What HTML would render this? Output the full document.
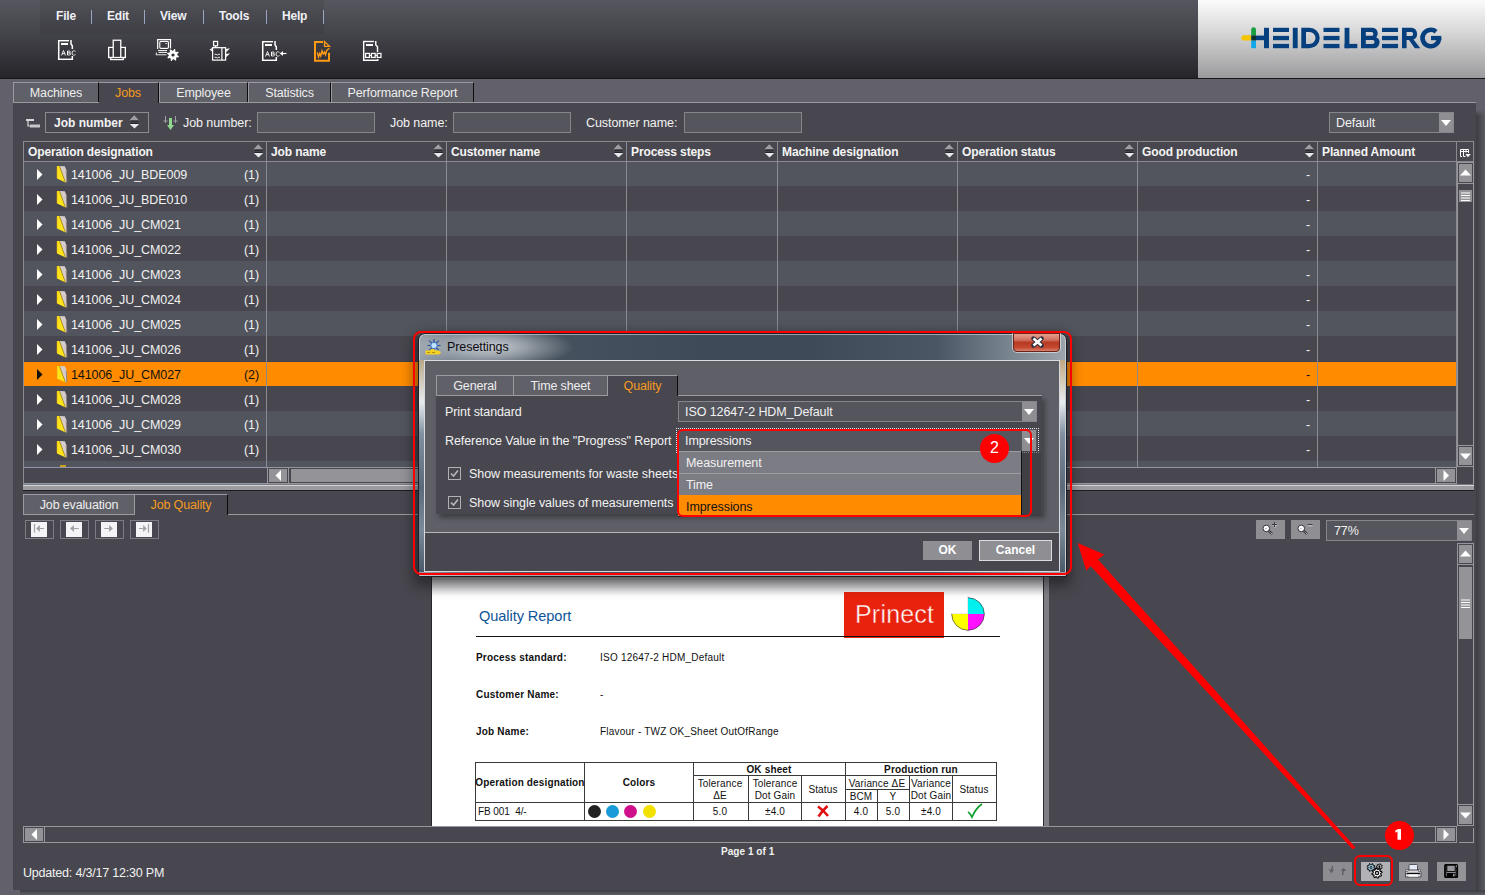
<!DOCTYPE html>
<html><head><meta charset="utf-8"><style>
*{margin:0;padding:0;box-sizing:border-box}
html,body{width:1485px;height:895px;overflow:hidden;background:#62616b;font-family:"Liberation Sans",sans-serif;font-size:12px;color:#f2f2f2}
.a{position:absolute}
.menu{top:9px;font-weight:bold;font-size:12px;color:#eef0f4;line-height:14px;letter-spacing:-0.2px}
.msep{top:10px;width:1px;height:14px;background:#9aa4c0}
.tab{height:21px;background:#606068;border-top:1px solid #9a9aa0;border-left:1px solid #9a9aa0;border-right:1px solid #0c0c0e;text-align:center;line-height:20px;font-size:12.5px;letter-spacing:-0.15px;color:#eee;white-space:nowrap}
.inp{height:21px;background:#55555d;border:1px solid #85858b}
.lbl{line-height:14px;white-space:nowrap}
.th{height:19px;font-weight:bold;line-height:19px;padding-left:5px;color:#f4f4f4;white-space:nowrap;letter-spacing:-0.12px}
.vl{width:1px;background:#8a8a90}
.hl{height:1px;background:#8a8a90}
.tx{white-space:nowrap;line-height:14px;font-size:12.5px;letter-spacing:-0.08px}
.btn{background:#8e8e93}
</style></head><body>
<div class="a" style="left:0;top:0;width:1198px;height:78px;background:linear-gradient(#56565e,#45454c 40%,#25252a)"></div>
<div class="a" style="left:40px;top:0;width:284px;height:34px;background:rgba(0,0,0,0.07)"></div>
<div class="a" style="left:1198px;top:0;width:287px;height:78px;background:linear-gradient(#fbfbfb,#d8d8d9 40%,#9b9b9d)"></div>
<div class="a" style="left:0;top:78px;width:1485px;height:1px;background:#17171a"></div>
<div class="a menu" style="left:56px">File</div>
<div class="a menu" style="left:107px">Edit</div>
<div class="a menu" style="left:160px">View</div>
<div class="a menu" style="left:219px">Tools</div>
<div class="a menu" style="left:282px">Help</div>
<div class="a msep" style="left:91px"></div>
<div class="a msep" style="left:144px"></div>
<div class="a msep" style="left:203px"></div>
<div class="a msep" style="left:266px"></div>
<div class="a msep" style="left:323px"></div>
<svg class="a" style="left:54px;top:36px" width="30" height="28" viewBox="54 36 30 28"><g style="filter:drop-shadow(0.6px 0.6px 0.4px #000)"><path d="M58.75 40 V60 M58 40.75 H69 M58 59.3 H73.0 M72.3 56 V60" fill="none" stroke="#fff" stroke-width="1.6"/><path d="M71 40 V44 L72.3 45.8 V49" fill="none" stroke="#fff" stroke-width="1.6"/><rect x="61" y="43" width="7" height="2" fill="#fff"/><path d="M61.5 55.5 L63.5 50.5 L65.5 55.5 M62.3 53.7 H64.7" fill="none" stroke="#fff" stroke-width="1"/><path d="M67.5 55.0 V51.0 H69.3 Q70.3 51.0 70.3 52.0 Q70.3 52.9 69.3 52.9 H67.5 M69.3 52.9 Q70.5 52.9 70.5 54.0 Q70.5 55.0 69.3 55.0 H67.5" fill="none" stroke="#fff" stroke-width="1"/><path d="M75.5 51.5 Q74.8 50.8 73.8 50.8 Q72 50.8 72 53.0 Q72 55.2 73.8 55.2 Q74.8 55.2 75.5 54.5" fill="none" stroke="#fff" stroke-width="1"/></g></svg>
<svg class="a" style="left:104px;top:36px" width="30" height="28" viewBox="104 36 30 28"><g style="filter:drop-shadow(0.6px 0.6px 0.4px #000)" fill="none" stroke="#fff" stroke-width="1.4"><rect x="113.2" y="40.2" width="7.6" height="17.3"/><path d="M113 47.4H108.7V57.5H113M121 47.4H125.3V57.5H121"/><path d="M110.7 57.6V59.6H123.3V57.6" stroke-width="1.3"/></g></svg>
<svg class="a" style="left:152px;top:34px" width="32" height="30" viewBox="152 34 32 30"><g style="filter:drop-shadow(0.6px 0.6px 0.4px #000)"><path d="M157.7 49V39.6H170.5V48.5" fill="none" stroke="#fff" stroke-width="1.3"/><rect x="159.8" y="41.4" width="8.6" height="6.9" rx="1" fill="none" stroke="#fff" stroke-width="1.2"/><path d="M165.3 43.6H167" stroke="#fff" stroke-width="0.9"/><path d="M158 50.6H167M158.5 52.4H167M156.5 52.5 156 54.8H166.5" fill="none" stroke="#fff" stroke-width="1"/><polygon points="178.98,56.19 178.64,57.33 176.58,57.39 176.04,58.04 176.39,60.07 175.33,60.64 173.84,59.22 173.00,59.30 171.81,60.98 170.67,60.64 170.61,58.58 169.96,58.04 167.93,58.39 167.36,57.33 168.78,55.84 168.70,55.00 167.02,53.81 167.36,52.67 169.42,52.61 169.96,51.96 169.61,49.93 170.67,49.36 172.16,50.78 173.00,50.70 174.19,49.02 175.33,49.36 175.39,51.42 176.04,51.96 178.07,51.61 178.64,52.67 177.22,54.16 177.30,55.00" fill="#fff"/><circle cx="173" cy="55" r="1.6" fill="#2e2e34"/></g></svg>
<svg class="a" style="left:205px;top:36px" width="30" height="28" viewBox="205 36 30 28"><g style="filter:drop-shadow(0.6px 0.6px 0.4px #000)" fill="none" stroke="#fff" stroke-width="1.3"><rect x="213.6" y="41.4" width="4" height="4.4"/><path d="M215.6 46V47.6"/><rect x="212.6" y="47.7" width="13" height="12.4"/><path d="M221.9 48V60"/><path d="M212.5 48.5 210.5 49.5 212.5 51M225.8 49.5 228.5 49 226 51.5M225.8 54.5 228.5 54 226 56.5" stroke-width="1.1"/><path d="M214.5 54.3H216.5L217.3 55.3L218.1 54.3H220M214.5 57.3H216.5L217.3 58.3L218.1 57.3H220" stroke-width="1"/></g></svg>
<svg class="a" style="left:258px;top:36px" width="32" height="28" viewBox="258 36 32 28"><g style="filter:drop-shadow(0.6px 0.6px 0.4px #000)"><path d="M262.75 41 V61 M262 41.75 H273 M262 60.3 H277.0 M276.3 57 V61" fill="none" stroke="#fff" stroke-width="1.6"/><path d="M275 41 V45 L276.3 46.8 V50" fill="none" stroke="#fff" stroke-width="1.6"/><rect x="265" y="44" width="7" height="2" fill="#fff"/><path d="M265.5 56.5 L267.5 51.5 L269.5 56.5 M266.3 54.7 H268.7" fill="none" stroke="#fff" stroke-width="1"/><path d="M271.5 56.0 V52.0 H273.3 Q274.3 52.0 274.3 53.0 Q274.3 53.9 273.3 53.9 H271.5 M273.3 53.9 Q274.5 53.9 274.5 55.0 Q274.5 56.0 273.3 56.0 H271.5" fill="none" stroke="#fff" stroke-width="1"/><path d="M279.5 52.5 Q278.8 51.8 277.8 51.8 Q276 51.8 276 54.0 Q276 56.2 277.8 56.2 Q278.8 56.2 279.5 55.5" fill="none" stroke="#fff" stroke-width="1"/><path d="M280.5 53.5H286.5" stroke="#fff" stroke-width="1.2"/><path d="M279.8 53.5 283 51V56Z" fill="#fff"/></g></svg>
<svg class="a" style="left:308px;top:36px" width="30" height="30" viewBox="308 36 30 30"><g stroke="#ff9a14" fill="none"><path d="M315 41V61.5M314 42H323M314 60.7H330M329 52.8V61.5" stroke-width="2"/><path d="M324.5 41.5V46.3H329.5Z" stroke-width="1.3"/><path d="M317.3 52.3 318.5 57 319.7 53.5 320.7 56 322 50.8 323.2 54 324.5 52 325.6 54.8 326.8 50.2 329.5 48.3" stroke-width="1.4"/></g></svg>
<svg class="a" style="left:356px;top:36px" width="32" height="28" viewBox="356 36 32 28"><g style="filter:drop-shadow(0.6px 0.6px 0.4px #000)"><path d="M363.7 40.8V61 M363 41.55H374 M363 60.3H378.5 M377.8 59V61" fill="none" stroke="#fff" stroke-width="1.5"/><path d="M375.8 41V45L377.5 46.8V52" fill="none" stroke="#fff" stroke-width="1.5"/><rect x="366" y="44" width="7" height="2" fill="#fff"/><rect x="365.6" y="53.4" width="3.8" height="4" fill="none" stroke="#fff" stroke-width="1.3"/><rect x="371.4" y="53.4" width="3.8" height="4" fill="none" stroke="#fff" stroke-width="1.3"/><rect x="377.2" y="53.4" width="3.8" height="4" fill="none" stroke="#fff" stroke-width="1.3"/><path d="M369.4 55.4H371.4M375.2 55.4H377.2" stroke="#fff" stroke-width="1"/></g></svg>
<svg class="a" style="left:1238px;top:22px" width="210" height="30" viewBox="1238 22 210 30"><g fill="#063f7e"><rect x="1256" y="35.6" width="9" height="4.6"/><rect x="1264" y="27.8" width="5" height="20.4"/><rect x="1273" y="27.8" width="16" height="4.2"/><rect x="1273" y="35.9" width="16" height="4.3"/><rect x="1273" y="43.9" width="16" height="4.3"/><rect x="1292.8" y="27.8" width="4.9" height="20.4"/><path d="M1301.3 27.8H1309.5A10.2 10.2 0 0 1 1309.5 48.2H1301.3ZM1306 32V44H1309.5A6 6 0 0 0 1309.5 32Z" fill-rule="evenodd"/><rect x="1323.5" y="27.8" width="16" height="4.2"/><rect x="1323.5" y="35.9" width="16" height="4.3"/><rect x="1323.5" y="43.9" width="16" height="4.3"/><rect x="1344.6" y="27.8" width="4.8" height="20.4"/><rect x="1344.6" y="43.9" width="12.7" height="4.3"/><path d="M1361 27.8H1372A5.6 5.6 0 0 1 1376.2 37.2 5.8 5.8 0 0 1 1373 48.2H1361ZM1365.8 32V35.8H1371.5A1.9 1.9 0 0 0 1371.5 32ZM1365.8 39.9V44.1H1372.5A2.1 2.1 0 0 0 1372.5 39.9Z" fill-rule="evenodd"/><rect x="1382" y="27.8" width="16" height="4.2"/><rect x="1382" y="35.9" width="16" height="4.3"/><rect x="1382" y="43.9" width="16" height="4.3"/><path d="M1402 27.8H1411.5A6.2 6.2 0 0 1 1413.5 39.6L1420.3 48.2H1414.8L1409 40H1406.6V48.2H1402ZM1406.6 32V35.9H1411.2A1.95 1.95 0 0 0 1411.2 32Z" fill-rule="evenodd"/><path d="M1436.1 31.7A8.25 8.25 0 1 0 1439.05 38" fill="none" stroke="#063f7e" stroke-width="4.6"/><rect x="1431" y="35.9" width="10.3" height="4.3"/></g><path d="M1251.3 35.3H1244A2.6 2.6 0 0 0 1244 40.5H1251.3Z" fill="#f5c400"/><path d="M1251.2 35.3V29.6A2.4 2.4 0 0 1 1256 29.6V35.3Z" fill="#16a040"/><rect x="1251.2" y="40.5" width="4.8" height="7.7" fill="#10a8e8"/><rect x="1251.2" y="35.3" width="4.8" height="5.2" fill="#0a3530"/></svg>
<div class="a" style="left:1476px;top:110px;width:9px;height:785px;background:linear-gradient(#62616b,rgba(98,97,107,0) 6px),linear-gradient(90deg,#3c3c43,#5a5a62)"></div>
<div class="a" style="left:20px;top:890px;width:1465px;height:5px;background:linear-gradient(#3c3c43,#5e5e66)"></div>
<div class="a" style="left:13px;top:102px;width:1463px;height:788px;background:#48474f;border-top:1px solid #9a9aa0"></div>
<div class="a tab" style="left:13px;top:82px;width:86px;height:20px">Machines</div>
<div class="a tab" style="left:99px;top:82px;width:60px;height:21px;background:#48474f;color:#f59a1e;border-left:none;padding-right:1px">Jobs</div>
<div class="a tab" style="left:159px;top:82px;width:89px;height:20px">Employee</div>
<div class="a tab" style="left:248px;top:82px;width:83px;height:20px">Statistics</div>
<div class="a tab" style="left:331px;top:82px;width:143px;height:20px">Performance Report</div>
<svg class="a" style="left:25px;top:118px" width="16" height="11" viewBox="0 0 16 11"><rect x="1" y="1" width="8" height="2" fill="#d8d8dc"/><path d="M3 3V8H5" stroke="#d8d8dc" stroke-width="1.2" fill="none"/><rect x="5" y="6.5" width="10" height="3" fill="#c8c8cc"/></svg>
<div class="a inp" style="left:45px;top:112px;width:104px;background:#48474f;border-color:#8a8a90"></div>
<div class="a tx" style="left:54px;top:116px;font-weight:bold;font-size:12px;letter-spacing:0">Job number</div>
<svg class="a" style="left:129px;top:115px" width="11" height="15" viewBox="0 0 11 15"><path d="M0.8 5.6 5.5 0.6 10.2 5.6Z" fill="#9c9ca2"/><path d="M1 5.3 5.5 0.6" stroke="#d8dae4" stroke-width="0.5"/><rect x="1.5" y="5.5" width="8" height="1.2" fill="#25252a"/><rect x="1.5" y="7.9" width="8" height="1.2" fill="#25252a"/><path d="M0.8 9.1 10.2 9.1 5.5 13.6Z" fill="#e8eaf2"/></svg>
<svg class="a" style="left:163px;top:116px" width="15" height="15" viewBox="0 0 15 15"><path d="M2.5 0V7M0.5 5H4.5M12.5 0V7M10.5 5H14.5" stroke="#a0a0a8" stroke-width="1"/><path d="M6 2H9V9H11L7.5 14 4 9H6Z" fill="#90d890"/></svg>
<div class="a tx" style="left:183px;top:116px">Job number:</div>
<div class="a inp" style="left:257px;top:112px;width:118px"></div>
<div class="a tx" style="left:390px;top:116px">Job name:</div>
<div class="a inp" style="left:453px;top:112px;width:118px"></div>
<div class="a tx" style="left:586px;top:116px">Customer name:</div>
<div class="a inp" style="left:684px;top:112px;width:118px"></div>
<div class="a inp" style="left:1329px;top:112px;width:125px"></div>
<div class="a tx" style="left:1336px;top:116px">Default</div>
<div class="a btn" style="left:1439px;top:113px;width:14px;height:19px"></div>
<svg class="a" style="left:1440px;top:119px" width="12" height="8" viewBox="0 0 12 8"><path d="M1 1H11L6 7Z" fill="#fff"/></svg>
<div class="a" style="left:23px;top:141px;width:1451px;height:343px;border:1px solid #8a8a90;border-bottom:none"></div>
<div class="a" style="left:24px;top:161px;width:1432px;height:25px;background:#52555d"></div>
<div class="a" style="left:24px;top:186px;width:1432px;height:25px;background:#48474f"></div>
<div class="a" style="left:24px;top:211px;width:1432px;height:25px;background:#52555d"></div>
<div class="a" style="left:24px;top:236px;width:1432px;height:25px;background:#48474f"></div>
<div class="a" style="left:24px;top:261px;width:1432px;height:25px;background:#52555d"></div>
<div class="a" style="left:24px;top:286px;width:1432px;height:25px;background:#48474f"></div>
<div class="a" style="left:24px;top:311px;width:1432px;height:25px;background:#52555d"></div>
<div class="a" style="left:24px;top:336px;width:1432px;height:25px;background:#48474f"></div>
<div class="a" style="left:24px;top:361px;width:1432px;height:25px;background:#ff8c00"></div>
<div class="a" style="left:24px;top:361px;width:1432px;height:1px;background:#3c4252"></div>
<div class="a" style="left:24px;top:386px;width:1432px;height:1px;background:#3c4252"></div>
<div class="a" style="left:24px;top:386px;width:1432px;height:25px;background:#48474f"></div>
<div class="a" style="left:24px;top:411px;width:1432px;height:25px;background:#52555d"></div>
<div class="a" style="left:24px;top:436px;width:1432px;height:25px;background:#48474f"></div>
<div class="a" style="left:24px;top:461px;width:1432px;height:6px;background:#52555d"></div>
<div class="a hl" style="left:24px;top:161px;width:1449px"></div>
<div class="a th" style="left:23px;top:143px">Operation designation</div>
<svg class="a" style="left:253px;top:144px" width="11" height="15" viewBox="0 0 11 15"><path d="M0.8 5.6 5.5 0.6 10.2 5.6Z" fill="#9c9ca2"/><path d="M1 5.3 5.5 0.6" stroke="#d8dae4" stroke-width="0.5"/><rect x="1.5" y="5.5" width="8" height="1.2" fill="#25252a"/><rect x="1.5" y="7.9" width="8" height="1.2" fill="#25252a"/><path d="M0.8 9.1 10.2 9.1 5.5 13.6Z" fill="#e8eaf2"/></svg>
<div class="a th" style="left:266px;top:143px">Job name</div>
<svg class="a" style="left:433px;top:144px" width="11" height="15" viewBox="0 0 11 15"><path d="M0.8 5.6 5.5 0.6 10.2 5.6Z" fill="#9c9ca2"/><path d="M1 5.3 5.5 0.6" stroke="#d8dae4" stroke-width="0.5"/><rect x="1.5" y="5.5" width="8" height="1.2" fill="#25252a"/><rect x="1.5" y="7.9" width="8" height="1.2" fill="#25252a"/><path d="M0.8 9.1 10.2 9.1 5.5 13.6Z" fill="#e8eaf2"/></svg>
<div class="a th" style="left:446px;top:143px">Customer name</div>
<svg class="a" style="left:613px;top:144px" width="11" height="15" viewBox="0 0 11 15"><path d="M0.8 5.6 5.5 0.6 10.2 5.6Z" fill="#9c9ca2"/><path d="M1 5.3 5.5 0.6" stroke="#d8dae4" stroke-width="0.5"/><rect x="1.5" y="5.5" width="8" height="1.2" fill="#25252a"/><rect x="1.5" y="7.9" width="8" height="1.2" fill="#25252a"/><path d="M0.8 9.1 10.2 9.1 5.5 13.6Z" fill="#e8eaf2"/></svg>
<div class="a th" style="left:626px;top:143px">Process steps</div>
<svg class="a" style="left:764px;top:144px" width="11" height="15" viewBox="0 0 11 15"><path d="M0.8 5.6 5.5 0.6 10.2 5.6Z" fill="#9c9ca2"/><path d="M1 5.3 5.5 0.6" stroke="#d8dae4" stroke-width="0.5"/><rect x="1.5" y="5.5" width="8" height="1.2" fill="#25252a"/><rect x="1.5" y="7.9" width="8" height="1.2" fill="#25252a"/><path d="M0.8 9.1 10.2 9.1 5.5 13.6Z" fill="#e8eaf2"/></svg>
<div class="a th" style="left:777px;top:143px">Machine designation</div>
<svg class="a" style="left:944px;top:144px" width="11" height="15" viewBox="0 0 11 15"><path d="M0.8 5.6 5.5 0.6 10.2 5.6Z" fill="#9c9ca2"/><path d="M1 5.3 5.5 0.6" stroke="#d8dae4" stroke-width="0.5"/><rect x="1.5" y="5.5" width="8" height="1.2" fill="#25252a"/><rect x="1.5" y="7.9" width="8" height="1.2" fill="#25252a"/><path d="M0.8 9.1 10.2 9.1 5.5 13.6Z" fill="#e8eaf2"/></svg>
<div class="a th" style="left:957px;top:143px">Operation status</div>
<svg class="a" style="left:1124px;top:144px" width="11" height="15" viewBox="0 0 11 15"><path d="M0.8 5.6 5.5 0.6 10.2 5.6Z" fill="#9c9ca2"/><path d="M1 5.3 5.5 0.6" stroke="#d8dae4" stroke-width="0.5"/><rect x="1.5" y="5.5" width="8" height="1.2" fill="#25252a"/><rect x="1.5" y="7.9" width="8" height="1.2" fill="#25252a"/><path d="M0.8 9.1 10.2 9.1 5.5 13.6Z" fill="#e8eaf2"/></svg>
<div class="a th" style="left:1137px;top:143px">Good production</div>
<svg class="a" style="left:1304px;top:144px" width="11" height="15" viewBox="0 0 11 15"><path d="M0.8 5.6 5.5 0.6 10.2 5.6Z" fill="#9c9ca2"/><path d="M1 5.3 5.5 0.6" stroke="#d8dae4" stroke-width="0.5"/><rect x="1.5" y="5.5" width="8" height="1.2" fill="#25252a"/><rect x="1.5" y="7.9" width="8" height="1.2" fill="#25252a"/><path d="M0.8 9.1 10.2 9.1 5.5 13.6Z" fill="#e8eaf2"/></svg>
<div class="a th" style="left:1317px;top:143px">Planned Amount</div>
<div class="a vl" style="left:266px;top:142px;height:325px"></div>
<div class="a vl" style="left:446px;top:142px;height:325px"></div>
<div class="a vl" style="left:626px;top:142px;height:325px"></div>
<div class="a vl" style="left:777px;top:142px;height:325px"></div>
<div class="a vl" style="left:957px;top:142px;height:325px"></div>
<div class="a vl" style="left:1137px;top:142px;height:325px"></div>
<div class="a vl" style="left:1317px;top:142px;height:325px"></div>
<div class="a vl" style="left:1456px;top:142px;height:325px"></div>
<svg class="a" style="left:37px;top:169px" width="6" height="11" viewBox="0 0 6 11"><path d="M0 0 5.5 5.5 0 11Z" fill="#fff"/></svg>
<svg class="a" style="left:52px;top:162px" width="20" height="24" viewBox="0 0 20 24"><path d="M7.5 4 12.8 4.2 14.6 8.5 14.8 20.3 13.2 20.3Z" fill="#d6cccc"/><path d="M14.2 8.5 14.9 20.3" stroke="#8a7a78" stroke-width="0.9"/><path d="M5 4 7.5 4 13.6 20.5 5 16.5Z" fill="#ffe41c"/><path d="M7.5 4.3 13.4 20.3" stroke="#a08018" stroke-width="0.8"/><path d="M5 4.5V16" stroke="#e0a010" stroke-width="0.6"/></svg>
<div class="a tx" style="left:71px;top:168px;color:#f2f2f2">141006_JU_BDE009</div>
<div class="a tx" style="left:244px;top:168px;color:#f2f2f2">(1)</div>
<div class="a tx" style="left:1306px;top:168px;color:#f2f2f2">-</div>
<svg class="a" style="left:37px;top:194px" width="6" height="11" viewBox="0 0 6 11"><path d="M0 0 5.5 5.5 0 11Z" fill="#fff"/></svg>
<svg class="a" style="left:52px;top:187px" width="20" height="24" viewBox="0 0 20 24"><path d="M7.5 4 12.8 4.2 14.6 8.5 14.8 20.3 13.2 20.3Z" fill="#d6cccc"/><path d="M14.2 8.5 14.9 20.3" stroke="#8a7a78" stroke-width="0.9"/><path d="M5 4 7.5 4 13.6 20.5 5 16.5Z" fill="#ffe41c"/><path d="M7.5 4.3 13.4 20.3" stroke="#a08018" stroke-width="0.8"/><path d="M5 4.5V16" stroke="#e0a010" stroke-width="0.6"/></svg>
<div class="a tx" style="left:71px;top:193px;color:#f2f2f2">141006_JU_BDE010</div>
<div class="a tx" style="left:244px;top:193px;color:#f2f2f2">(1)</div>
<div class="a tx" style="left:1306px;top:193px;color:#f2f2f2">-</div>
<svg class="a" style="left:37px;top:219px" width="6" height="11" viewBox="0 0 6 11"><path d="M0 0 5.5 5.5 0 11Z" fill="#fff"/></svg>
<svg class="a" style="left:52px;top:212px" width="20" height="24" viewBox="0 0 20 24"><path d="M7.5 4 12.8 4.2 14.6 8.5 14.8 20.3 13.2 20.3Z" fill="#d6cccc"/><path d="M14.2 8.5 14.9 20.3" stroke="#8a7a78" stroke-width="0.9"/><path d="M5 4 7.5 4 13.6 20.5 5 16.5Z" fill="#ffe41c"/><path d="M7.5 4.3 13.4 20.3" stroke="#a08018" stroke-width="0.8"/><path d="M5 4.5V16" stroke="#e0a010" stroke-width="0.6"/></svg>
<div class="a tx" style="left:71px;top:218px;color:#f2f2f2">141006_JU_CM021</div>
<div class="a tx" style="left:244px;top:218px;color:#f2f2f2">(1)</div>
<div class="a tx" style="left:1306px;top:218px;color:#f2f2f2">-</div>
<svg class="a" style="left:37px;top:244px" width="6" height="11" viewBox="0 0 6 11"><path d="M0 0 5.5 5.5 0 11Z" fill="#fff"/></svg>
<svg class="a" style="left:52px;top:237px" width="20" height="24" viewBox="0 0 20 24"><path d="M7.5 4 12.8 4.2 14.6 8.5 14.8 20.3 13.2 20.3Z" fill="#d6cccc"/><path d="M14.2 8.5 14.9 20.3" stroke="#8a7a78" stroke-width="0.9"/><path d="M5 4 7.5 4 13.6 20.5 5 16.5Z" fill="#ffe41c"/><path d="M7.5 4.3 13.4 20.3" stroke="#a08018" stroke-width="0.8"/><path d="M5 4.5V16" stroke="#e0a010" stroke-width="0.6"/></svg>
<div class="a tx" style="left:71px;top:243px;color:#f2f2f2">141006_JU_CM022</div>
<div class="a tx" style="left:244px;top:243px;color:#f2f2f2">(1)</div>
<div class="a tx" style="left:1306px;top:243px;color:#f2f2f2">-</div>
<svg class="a" style="left:37px;top:269px" width="6" height="11" viewBox="0 0 6 11"><path d="M0 0 5.5 5.5 0 11Z" fill="#fff"/></svg>
<svg class="a" style="left:52px;top:262px" width="20" height="24" viewBox="0 0 20 24"><path d="M7.5 4 12.8 4.2 14.6 8.5 14.8 20.3 13.2 20.3Z" fill="#d6cccc"/><path d="M14.2 8.5 14.9 20.3" stroke="#8a7a78" stroke-width="0.9"/><path d="M5 4 7.5 4 13.6 20.5 5 16.5Z" fill="#ffe41c"/><path d="M7.5 4.3 13.4 20.3" stroke="#a08018" stroke-width="0.8"/><path d="M5 4.5V16" stroke="#e0a010" stroke-width="0.6"/></svg>
<div class="a tx" style="left:71px;top:268px;color:#f2f2f2">141006_JU_CM023</div>
<div class="a tx" style="left:244px;top:268px;color:#f2f2f2">(1)</div>
<div class="a tx" style="left:1306px;top:268px;color:#f2f2f2">-</div>
<svg class="a" style="left:37px;top:294px" width="6" height="11" viewBox="0 0 6 11"><path d="M0 0 5.5 5.5 0 11Z" fill="#fff"/></svg>
<svg class="a" style="left:52px;top:287px" width="20" height="24" viewBox="0 0 20 24"><path d="M7.5 4 12.8 4.2 14.6 8.5 14.8 20.3 13.2 20.3Z" fill="#d6cccc"/><path d="M14.2 8.5 14.9 20.3" stroke="#8a7a78" stroke-width="0.9"/><path d="M5 4 7.5 4 13.6 20.5 5 16.5Z" fill="#ffe41c"/><path d="M7.5 4.3 13.4 20.3" stroke="#a08018" stroke-width="0.8"/><path d="M5 4.5V16" stroke="#e0a010" stroke-width="0.6"/></svg>
<div class="a tx" style="left:71px;top:293px;color:#f2f2f2">141006_JU_CM024</div>
<div class="a tx" style="left:244px;top:293px;color:#f2f2f2">(1)</div>
<div class="a tx" style="left:1306px;top:293px;color:#f2f2f2">-</div>
<svg class="a" style="left:37px;top:319px" width="6" height="11" viewBox="0 0 6 11"><path d="M0 0 5.5 5.5 0 11Z" fill="#fff"/></svg>
<svg class="a" style="left:52px;top:312px" width="20" height="24" viewBox="0 0 20 24"><path d="M7.5 4 12.8 4.2 14.6 8.5 14.8 20.3 13.2 20.3Z" fill="#d6cccc"/><path d="M14.2 8.5 14.9 20.3" stroke="#8a7a78" stroke-width="0.9"/><path d="M5 4 7.5 4 13.6 20.5 5 16.5Z" fill="#ffe41c"/><path d="M7.5 4.3 13.4 20.3" stroke="#a08018" stroke-width="0.8"/><path d="M5 4.5V16" stroke="#e0a010" stroke-width="0.6"/></svg>
<div class="a tx" style="left:71px;top:318px;color:#f2f2f2">141006_JU_CM025</div>
<div class="a tx" style="left:244px;top:318px;color:#f2f2f2">(1)</div>
<div class="a tx" style="left:1306px;top:318px;color:#f2f2f2">-</div>
<svg class="a" style="left:37px;top:344px" width="6" height="11" viewBox="0 0 6 11"><path d="M0 0 5.5 5.5 0 11Z" fill="#fff"/></svg>
<svg class="a" style="left:52px;top:337px" width="20" height="24" viewBox="0 0 20 24"><path d="M7.5 4 12.8 4.2 14.6 8.5 14.8 20.3 13.2 20.3Z" fill="#d6cccc"/><path d="M14.2 8.5 14.9 20.3" stroke="#8a7a78" stroke-width="0.9"/><path d="M5 4 7.5 4 13.6 20.5 5 16.5Z" fill="#ffe41c"/><path d="M7.5 4.3 13.4 20.3" stroke="#a08018" stroke-width="0.8"/><path d="M5 4.5V16" stroke="#e0a010" stroke-width="0.6"/></svg>
<div class="a tx" style="left:71px;top:343px;color:#f2f2f2">141006_JU_CM026</div>
<div class="a tx" style="left:244px;top:343px;color:#f2f2f2">(1)</div>
<div class="a tx" style="left:1306px;top:343px;color:#f2f2f2">-</div>
<svg class="a" style="left:37px;top:369px" width="6" height="11" viewBox="0 0 6 11"><path d="M0 0 5.5 5.5 0 11Z" fill="#111"/></svg>
<svg class="a" style="left:52px;top:362px" width="20" height="24" viewBox="0 0 20 24"><path d="M7.5 4 12.8 4.2 14.6 8.5 14.8 20.3 13.2 20.3Z" fill="#d6cccc"/><path d="M14.2 8.5 14.9 20.3" stroke="#8a7a78" stroke-width="0.9"/><path d="M5 4 7.5 4 13.6 20.5 5 16.5Z" fill="#ffe41c"/><path d="M7.5 4.3 13.4 20.3" stroke="#a08018" stroke-width="0.8"/><path d="M5 4.5V16" stroke="#e0a010" stroke-width="0.6"/></svg>
<div class="a tx" style="left:71px;top:368px;color:#111">141006_JU_CM027</div>
<div class="a tx" style="left:244px;top:368px;color:#111">(2)</div>
<div class="a tx" style="left:1306px;top:368px;color:#111">-</div>
<svg class="a" style="left:37px;top:394px" width="6" height="11" viewBox="0 0 6 11"><path d="M0 0 5.5 5.5 0 11Z" fill="#fff"/></svg>
<svg class="a" style="left:52px;top:387px" width="20" height="24" viewBox="0 0 20 24"><path d="M7.5 4 12.8 4.2 14.6 8.5 14.8 20.3 13.2 20.3Z" fill="#d6cccc"/><path d="M14.2 8.5 14.9 20.3" stroke="#8a7a78" stroke-width="0.9"/><path d="M5 4 7.5 4 13.6 20.5 5 16.5Z" fill="#ffe41c"/><path d="M7.5 4.3 13.4 20.3" stroke="#a08018" stroke-width="0.8"/><path d="M5 4.5V16" stroke="#e0a010" stroke-width="0.6"/></svg>
<div class="a tx" style="left:71px;top:393px;color:#f2f2f2">141006_JU_CM028</div>
<div class="a tx" style="left:244px;top:393px;color:#f2f2f2">(1)</div>
<div class="a tx" style="left:1306px;top:393px;color:#f2f2f2">-</div>
<svg class="a" style="left:37px;top:419px" width="6" height="11" viewBox="0 0 6 11"><path d="M0 0 5.5 5.5 0 11Z" fill="#fff"/></svg>
<svg class="a" style="left:52px;top:412px" width="20" height="24" viewBox="0 0 20 24"><path d="M7.5 4 12.8 4.2 14.6 8.5 14.8 20.3 13.2 20.3Z" fill="#d6cccc"/><path d="M14.2 8.5 14.9 20.3" stroke="#8a7a78" stroke-width="0.9"/><path d="M5 4 7.5 4 13.6 20.5 5 16.5Z" fill="#ffe41c"/><path d="M7.5 4.3 13.4 20.3" stroke="#a08018" stroke-width="0.8"/><path d="M5 4.5V16" stroke="#e0a010" stroke-width="0.6"/></svg>
<div class="a tx" style="left:71px;top:418px;color:#f2f2f2">141006_JU_CM029</div>
<div class="a tx" style="left:244px;top:418px;color:#f2f2f2">(1)</div>
<div class="a tx" style="left:1306px;top:418px;color:#f2f2f2">-</div>
<svg class="a" style="left:37px;top:444px" width="6" height="11" viewBox="0 0 6 11"><path d="M0 0 5.5 5.5 0 11Z" fill="#fff"/></svg>
<svg class="a" style="left:52px;top:437px" width="20" height="24" viewBox="0 0 20 24"><path d="M7.5 4 12.8 4.2 14.6 8.5 14.8 20.3 13.2 20.3Z" fill="#d6cccc"/><path d="M14.2 8.5 14.9 20.3" stroke="#8a7a78" stroke-width="0.9"/><path d="M5 4 7.5 4 13.6 20.5 5 16.5Z" fill="#ffe41c"/><path d="M7.5 4.3 13.4 20.3" stroke="#a08018" stroke-width="0.8"/><path d="M5 4.5V16" stroke="#e0a010" stroke-width="0.6"/></svg>
<div class="a tx" style="left:71px;top:443px;color:#f2f2f2">141006_JU_CM030</div>
<div class="a tx" style="left:244px;top:443px;color:#f2f2f2">(1)</div>
<div class="a tx" style="left:1306px;top:443px;color:#f2f2f2">-</div>
<div class="a" style="left:60px;top:465px;width:6px;height:2px;background:#c8a020"></div>
<svg class="a" style="left:1457px;top:147px" width="15" height="13" viewBox="1457 147 15 13"><path d="M1460.5 156.5V149.5H1468.5V153M1460.5 151.5H1468.5M1463.5 149.5V156.5H1465.5M1466 149.5V152.5M1460.5 156.5H1462" fill="none" stroke="#fff" stroke-width="1"/><path d="M1465.3 154H1470.7L1468 157.2Z" fill="#fff"/></svg>
<div class="a" style="left:1457px;top:162px;width:1px;height:305px;background:#96969c"></div>
<div class="a" style="left:1473px;top:162px;width:1px;height:305px;background:#96969c"></div>
<div class="a" style="left:1457px;top:162px;width:17px;height:1px;background:#96969c"></div>
<div class="a" style="left:1457px;top:466px;width:17px;height:1px;background:#96969c"></div>
<div class="a" style="left:1459px;top:164px;width:13px;height:18px;background:#939398"></div>
<svg class="a" style="left:1460px;top:169px" width="11" height="7" viewBox="0 0 11 7"><path d="M0 6.5H11L5.5 0.5Z" fill="#fff"/></svg>
<div class="a" style="left:1458px;top:183px;width:15px;height:1px;background:#96969c"></div>
<div class="a" style="left:1459px;top:190px;width:13px;height:12px;background:#939398"></div>
<svg class="a" style="left:1461px;top:192px" width="9" height="9" viewBox="0 0 9 9"><path d="M0 1H9M0 3.5H9M0 6H9M0 8.5H9" stroke="#fff" stroke-width="1"/></svg>
<div class="a" style="left:1458px;top:445px;width:15px;height:1px;background:#96969c"></div>
<div class="a" style="left:1459px;top:447px;width:13px;height:18px;background:#939398"></div>
<svg class="a" style="left:1460px;top:453px" width="11" height="7" viewBox="0 0 11 7"><path d="M0 0.5H11L5.5 6.5Z" fill="#fff"/></svg>
<div class="a" style="left:24px;top:467px;width:243px;height:1px;background:#8e96a8"></div>
<div class="a" style="left:24px;top:483px;width:243px;height:1px;background:#8e96a8"></div>
<div class="a" style="left:267px;top:467px;width:1190px;height:1px;background:#96969c"></div>
<div class="a" style="left:267px;top:483px;width:1190px;height:1px;background:#96969c"></div>
<div class="a" style="left:267px;top:467px;width:1px;height:17px;background:#96969c"></div>
<div class="a" style="left:269px;top:469px;width:18px;height:13px;background:#939398"></div>
<svg class="a" style="left:275px;top:470px" width="7" height="11" viewBox="0 0 7 11"><path d="M6 0V11L0.5 5.5Z" fill="#fff"/></svg>
<div class="a" style="left:288px;top:468px;width:1px;height:15px;background:#96969c"></div>
<div class="a" style="left:291px;top:469px;width:140px;height:13px;background:#939398"></div>
<div class="a" style="left:1435px;top:468px;width:1px;height:15px;background:#96969c"></div>
<div class="a" style="left:1437px;top:469px;width:18px;height:13px;background:#939398"></div>
<svg class="a" style="left:1443px;top:470px" width="7" height="11" viewBox="0 0 7 11"><path d="M0.5 0V11L6 5.5Z" fill="#fff"/></svg>
<div class="a" style="left:1456px;top:467px;width:1px;height:17px;background:#96969c"></div>
<div class="a" style="left:1473px;top:467px;width:1px;height:17px;background:#96969c"></div>
<div class="a" style="left:23px;top:484px;width:1451px;height:1px;background:#7a7a80"></div>
<div class="a" style="left:23px;top:485px;width:1451px;height:1px;background:#d4d4d8"></div>
<div class="a" style="left:23px;top:486px;width:1451px;height:4px;background:#9b9ba0"></div>
<div class="a" style="left:23px;top:490px;width:1451px;height:1px;background:#1e1e22"></div>
<div class="a hl" style="left:23px;top:514px;width:1451px;background:#9a9aa0"></div>
<div class="a tab" style="left:23px;top:494px;width:112px;height:20px">Job evaluation</div>
<div class="a tab" style="left:134px;top:494px;width:94px;height:21px;background:#48474f;color:#f59a1e">Job Quality</div>
<div class="a" style="left:25px;top:520px;width:29px;height:19px;border:1px solid #7c7c84"></div>
<svg class="a" style="left:31px;top:522px" width="16" height="15" viewBox="0 0 16 15"><rect x="0" y="0" width="16" height="15" fill="#f4f4f6"/><path d="M3.5 2V10.6" stroke="#a0a0a6" stroke-width="1.2"/><path d="M5.2 6.5 8.9 3V10Z" fill="#a0a0a6"/><path d="M8.5 6.5H13" stroke="#a0a0a6" stroke-width="1"/></svg>
<div class="a" style="left:60px;top:520px;width:29px;height:19px;border:1px solid #7c7c84"></div>
<svg class="a" style="left:66px;top:522px" width="16" height="15" viewBox="0 0 16 15"><rect x="0" y="0" width="16" height="15" fill="#f4f4f6"/><path d="M4.1 6.5 7.9 3V10Z" fill="#a0a0a6"/><path d="M7.5 6.5H12.8" stroke="#a0a0a6" stroke-width="1"/></svg>
<div class="a" style="left:95px;top:520px;width:29px;height:19px;border:1px solid #7c7c84"></div>
<svg class="a" style="left:101px;top:522px" width="16" height="15" viewBox="0 0 16 15"><rect x="0" y="0" width="16" height="15" fill="#f4f4f6"/><path d="M11.9 6.5 8.1 3V10Z" fill="#a0a0a6"/><path d="M3.2 6.5H8.5" stroke="#a0a0a6" stroke-width="1"/></svg>
<div class="a" style="left:130px;top:520px;width:29px;height:19px;border:1px solid #7c7c84"></div>
<svg class="a" style="left:136px;top:522px" width="16" height="15" viewBox="0 0 16 15"><rect x="0" y="0" width="16" height="15" fill="#f4f4f6"/><path d="M12.5 2V10.6" stroke="#a0a0a6" stroke-width="1.2"/><path d="M10.8 6.5 7.1 3V10Z" fill="#a0a0a6"/><path d="M3 6.5H7.5" stroke="#a0a0a6" stroke-width="1"/></svg>
<div class="a btn" style="left:1256px;top:520px;width:29px;height:19px"></div>
<div class="a btn" style="left:1291px;top:520px;width:29px;height:19px"></div>
<svg class="a" style="left:1256px;top:520px" width="29" height="19" viewBox="0 0 29 19"><path d="M12.5 10.5 16 14" stroke="#303036" stroke-width="2.4"/><path d="M12.5 10.5 16 14" stroke="#f0f0f4" stroke-width="1" stroke-dasharray="1 0.8"/><circle cx="10.3" cy="8.4" r="3.3" fill="#fff" stroke="#303036" stroke-width="1"/><path d="M9.2 9.3 10.6 7.9" stroke="#505058" stroke-width="0.7"/><path d="M16 4.5H21M18.5 2V7" stroke="#c8ccd8" stroke-width="1" transform="translate(0.6,0.8)"/><path d="M16 4.5H21M18.5 2V7" stroke="#3a3a42" stroke-width="1.1"/></svg>
<svg class="a" style="left:1291px;top:520px" width="29" height="19" viewBox="0 0 29 19"><path d="M12.5 10.5 16 14" stroke="#303036" stroke-width="2.4"/><path d="M12.5 10.5 16 14" stroke="#f0f0f4" stroke-width="1" stroke-dasharray="1 0.8"/><circle cx="10.3" cy="8.4" r="3.3" fill="#fff" stroke="#303036" stroke-width="1"/><path d="M9.2 9.3 10.6 7.9" stroke="#505058" stroke-width="0.7"/><path d="M16.5 5H21.5" stroke="#c8ccd8" stroke-width="1" transform="translate(0,0.8)"/><path d="M16.5 4.5H21.5" stroke="#3a3a42" stroke-width="1"/></svg>
<div class="a inp" style="left:1326px;top:520px;width:146px"></div>
<div class="a tx" style="left:1334px;top:524px">77%</div>
<div class="a btn" style="left:1457px;top:521px;width:14px;height:19px"></div>
<svg class="a" style="left:1458px;top:527px" width="12" height="8" viewBox="0 0 12 8"><path d="M1 1H11L6 7Z" fill="#fff"/></svg>
<div class="a" style="left:1457px;top:543px;width:1px;height:283px;background:#96969c"></div>
<div class="a" style="left:1473px;top:543px;width:1px;height:283px;background:#96969c"></div>
<div class="a" style="left:1457px;top:543px;width:17px;height:1px;background:#96969c"></div>
<div class="a" style="left:1457px;top:825px;width:17px;height:1px;background:#96969c"></div>
<div class="a" style="left:1459px;top:545px;width:13px;height:18px;background:#939398"></div>
<svg class="a" style="left:1460px;top:550px" width="11" height="7" viewBox="0 0 11 7"><path d="M0 6.5H11L5.5 0.5Z" fill="#fff"/></svg>
<div class="a" style="left:1458px;top:564px;width:15px;height:1px;background:#96969c"></div>
<div class="a" style="left:1459px;top:567px;width:13px;height:72px;background:#939398"></div>
<svg class="a" style="left:1461px;top:599px" width="9" height="9" viewBox="0 0 9 9"><path d="M0 1H9M0 3.5H9M0 6H9M0 8.5H9" stroke="#fff" stroke-width="1"/></svg>
<div class="a" style="left:1458px;top:804px;width:15px;height:1px;background:#96969c"></div>
<div class="a" style="left:1459px;top:806px;width:13px;height:18px;background:#939398"></div>
<svg class="a" style="left:1460px;top:812px" width="11" height="7" viewBox="0 0 11 7"><path d="M0 0.5H11L5.5 6.5Z" fill="#fff"/></svg>
<div class="a" style="left:23px;top:826px;width:1434px;height:1px;background:#96969c"></div>
<div class="a" style="left:23px;top:842px;width:1434px;height:1px;background:#96969c"></div>
<div class="a" style="left:23px;top:826px;width:1px;height:17px;background:#96969c"></div>
<div class="a" style="left:25px;top:828px;width:18px;height:13px;background:#939398"></div>
<svg class="a" style="left:31px;top:829px" width="7" height="11" viewBox="0 0 7 11"><path d="M6 0V11L0.5 5.5Z" fill="#fff"/></svg>
<div class="a" style="left:44px;top:827px;width:1px;height:15px;background:#96969c"></div>
<div class="a" style="left:1435px;top:827px;width:1px;height:15px;background:#96969c"></div>
<div class="a" style="left:1437px;top:828px;width:18px;height:13px;background:#939398"></div>
<svg class="a" style="left:1443px;top:829px" width="7" height="11" viewBox="0 0 7 11"><path d="M0.5 0V11L6 5.5Z" fill="#fff"/></svg>
<div class="a" style="left:1456px;top:826px;width:1px;height:17px;background:#96969c"></div>
<div class="a" style="left:1473px;top:828px;width:1px;height:15px;background:#96969c"></div>
<div class="a" style="left:1459px;top:842px;width:15px;height:1px;background:#96969c"></div>
<div class="a tx" style="left:721px;top:845px;font-size:10px;font-weight:bold;letter-spacing:0.05px">Page 1 of 1</div>
<div class="a tx" style="left:23px;top:866px;letter-spacing:-0.2px">Updated: 4/3/17 12:30 PM</div>
<div class="a" style="left:1323px;top:862px;width:29px;height:19px;background:#8c8c91"></div>
<svg class="a" style="left:1323px;top:862px" width="29" height="19" viewBox="0 0 29 19"><circle cx="14.6" cy="8.5" r="6.2" fill="none" stroke="#8a94a6" stroke-width="0.7" stroke-dasharray="2.2 1.2"/><path d="M9.6 3.8 8.6 8.5M20.4 8.5 19.5 13.2" stroke="#5c5c64" stroke-width="1.3"/><path d="M5.9 7.6H11.1L8.4 11.2Z" fill="#5c5c64"/><path d="M17.9 8.9H23L20.5 5.8Z" fill="#5c5c64"/></svg>
<div class="a" style="left:1361px;top:862px;width:29px;height:19px;background:#b2b2b6"></div>
<svg class="a" style="left:1361px;top:862px" width="29" height="19" viewBox="1361 862 29 19"><polygon points="1381.65,867.16 1382.21,867.76 1381.79,868.51 1380.99,868.37 1380.45,868.75 1380.32,869.56 1379.47,869.70 1379.09,868.98 1378.45,868.80 1377.74,869.20 1377.10,868.63 1377.42,867.87 1377.17,867.27 1376.41,866.96 1376.46,866.10 1377.25,865.89 1377.57,865.31 1377.33,864.53 1378.03,864.03 1378.69,864.51 1379.34,864.40 1379.81,863.73 1380.64,863.97 1380.67,864.78 1381.16,865.22 1381.98,865.17 1382.31,865.96 1381.69,866.50" fill="#a0a0a6" stroke="#050505" stroke-width="0.9" stroke-linejoin="round"/><ellipse cx="1379.4" cy="866.7" rx="0.7" ry="1.2" fill="#050505"/><polygon points="1374.09,867.80 1374.98,868.46 1374.62,869.39 1373.52,869.28 1373.00,869.82 1373.17,870.92 1372.25,871.33 1371.55,870.47 1370.80,870.49 1370.14,871.38 1369.21,871.02 1369.32,869.92 1368.78,869.40 1367.68,869.57 1367.27,868.65 1368.13,867.95 1368.11,867.20 1367.22,866.54 1367.58,865.61 1368.68,865.72 1369.20,865.18 1369.03,864.08 1369.95,863.67 1370.65,864.53 1371.40,864.51 1372.06,863.62 1372.99,863.98 1372.88,865.08 1373.42,865.60 1374.52,865.43 1374.93,866.35 1374.07,867.05" fill="#8cb6cc" stroke="#050505" stroke-width="1" stroke-linejoin="round"/><circle cx="1371.1" cy="867.5" r="1.2" fill="#050505"/><circle cx="1371.1" cy="867.5" r="0.5" fill="#fff"/><polygon points="1380.63,874.22 1381.52,875.24 1380.85,876.29 1379.55,875.91 1378.77,876.46 1378.69,877.81 1377.46,878.08 1376.82,876.90 1375.88,876.73 1374.86,877.62 1373.81,876.95 1374.19,875.65 1373.64,874.87 1372.29,874.79 1372.02,873.56 1373.20,872.92 1373.37,871.98 1372.48,870.96 1373.15,869.91 1374.45,870.29 1375.23,869.74 1375.31,868.39 1376.54,868.12 1377.18,869.30 1378.12,869.47 1379.14,868.58 1380.19,869.25 1379.81,870.55 1380.36,871.33 1381.71,871.41 1381.98,872.64 1380.80,873.28" fill="#fafafa" stroke="#050505" stroke-width="1.1" stroke-linejoin="round"/><circle cx="1377" cy="873.1" r="1.7" fill="#c8c8d0" stroke="#050505" stroke-width="1.1"/></svg>
<div class="a" style="left:1399px;top:862px;width:29px;height:19px;background:#939398"></div>
<svg class="a" style="left:1399px;top:862px" width="29" height="19" viewBox="1399 862 29 19"><rect x="1409" y="864.5" width="8.5" height="6.5" rx="0.8" fill="#e6eaf6" stroke="#4a4a50" stroke-width="0.9"/><path d="M1405.5 877V872.5A2.5 2.5 0 0 1 1408 870H1418.5A2.5 2.5 0 0 1 1421 872.5V877Z" fill="#dcdce2" stroke="#4a4a4e" stroke-width="1"/><rect x="1406.5" y="872.8" width="13.5" height="1.4" fill="#0a0a0a"/><rect x="1408.5" y="874.4" width="9.5" height="2.3" fill="#fafafa"/><rect x="1406" y="869.3" width="2" height="2" fill="#f0f0f4" stroke="#4a4a4e" stroke-width="0.6"/><rect x="1418.5" y="869.3" width="2" height="2" fill="#f0f0f4" stroke="#4a4a4e" stroke-width="0.6"/></svg>
<div class="a" style="left:1437px;top:862px;width:29px;height:19px;background:#939398"></div>
<svg class="a" style="left:1437px;top:862px" width="29" height="19" viewBox="1437 862 29 19"><rect x="1445" y="864.9" width="12.2" height="12.2" rx="0.6" fill="#98989e" stroke="#050505" stroke-width="1.8"/><path d="M1446.8 865V871.6H1455.2V865" fill="none" stroke="#050505" stroke-width="1"/><path d="M1446 866V876.5M1456.2 867V876.5" stroke="#050505" stroke-width="0.8"/><rect x="1447" y="873" width="8.5" height="4" fill="#050505"/><rect x="1453" y="873.8" width="1.6" height="2.6" fill="#98989e"/><rect x="1456" y="865.6" width="1" height="1" fill="#d0d0d4"/></svg>
<div class="a" style="left:431px;top:570px;width:613px;height:256px;background:#fff;border-left:1px solid #26262b"></div>
<div class="a" style="left:432px;top:570px;width:612px;height:26px;background:linear-gradient(#707076,#c8c8cc 50%,#ffffff)"></div>
<div class="a" style="left:1043px;top:570px;width:1px;height:256px;background:#2a2a30"></div>
<div class="a" style="left:1044px;top:570px;width:5px;height:256px;background:#7e7e84"></div>
<div class="a tx" style="left:479px;top:607px;font-size:14.6px;line-height:18px;color:#0e5598">Quality Report</div>
<div class="a" style="left:844px;top:592px;width:100px;height:46px;background:#e8220c"></div>
<div class="a tx" style="left:855px;top:599px;font-size:25px;line-height:30px;color:#fff;-webkit-text-stroke:0.45px #e8220c;letter-spacing:0.2px">Prinect</div>
<svg class="a" style="left:948px;top:594px" width="40" height="40" viewBox="0 0 40 40"><path d="M20 2V38M3 20H37" stroke="#c4c4c4" stroke-width="0.7"/><path d="M20 20V3.7A16.3 16.3 0 0 1 36.3 20Z" fill="#00f0f0"/><path d="M20 20H36.3A16.3 16.3 0 0 1 20 36.3Z" fill="#ff10ff"/><path d="M20 20V36.3A16.3 16.3 0 0 1 3.7 20Z" fill="#ffff00"/><path d="M20 3.7A16.3 16.3 0 0 1 36.3 20 16.3 16.3 0 0 1 20 36.3 16.3 16.3 0 0 1 3.7 20" fill="none" stroke="#222" stroke-width="0.6"/></svg>
<div class="a" style="left:476px;top:636px;width:524px;height:1px;background:#111"></div>
<div class="a tx" style="left:476px;top:651px;font-size:10px;font-weight:bold;color:#111;letter-spacing:0.2px">Process standard:</div>
<div class="a tx" style="left:600px;top:651px;font-size:10px;color:#111;letter-spacing:0.22px">ISO 12647-2 HDM_Default</div>
<div class="a tx" style="left:476px;top:688px;font-size:10px;font-weight:bold;color:#111;letter-spacing:0.2px">Customer Name:</div>
<div class="a tx" style="left:600px;top:688px;font-size:10px;color:#111;letter-spacing:0.22px">-</div>
<div class="a tx" style="left:476px;top:725px;font-size:10px;font-weight:bold;color:#111;letter-spacing:0.2px">Job Name:</div>
<div class="a tx" style="left:600px;top:725px;font-size:10px;color:#111;letter-spacing:0.22px">Flavour - TWZ OK_Sheet OutOfRange</div>
<div class="a" style="left:475px;top:762px;width:522px;height:1px;background:#3a3a3a"></div>
<div class="a" style="left:693px;top:775px;width:304px;height:1px;background:#3a3a3a"></div>
<div class="a" style="left:845px;top:789px;width:65px;height:1px;background:#3a3a3a"></div>
<div class="a" style="left:475px;top:802px;width:522px;height:1px;background:#3a3a3a"></div>
<div class="a" style="left:475px;top:820px;width:522px;height:1px;background:#3a3a3a"></div>
<div class="a" style="left:475px;top:762px;width:1px;height:59px;background:#3a3a3a"></div>
<div class="a" style="left:584px;top:762px;width:1px;height:59px;background:#3a3a3a"></div>
<div class="a" style="left:693px;top:762px;width:1px;height:59px;background:#3a3a3a"></div>
<div class="a" style="left:845px;top:762px;width:1px;height:59px;background:#3a3a3a"></div>
<div class="a" style="left:996px;top:762px;width:1px;height:59px;background:#3a3a3a"></div>
<div class="a" style="left:748px;top:775px;width:1px;height:46px;background:#3a3a3a"></div>
<div class="a" style="left:801px;top:775px;width:1px;height:46px;background:#3a3a3a"></div>
<div class="a" style="left:909px;top:775px;width:1px;height:46px;background:#3a3a3a"></div>
<div class="a" style="left:952px;top:775px;width:1px;height:46px;background:#3a3a3a"></div>
<div class="a" style="left:877px;top:789px;width:1px;height:32px;background:#3a3a3a"></div>
<div class="a tx" style="left:430px;top:777px;width:200px;text-align:center;font-size:10px;line-height:12px;color:#111;letter-spacing:0.15px;font-weight:bold;">Operation designation</div>
<div class="a tx" style="left:539px;top:777px;width:200px;text-align:center;font-size:10px;line-height:12px;color:#111;letter-spacing:0.15px;font-weight:bold;">Colors</div>
<div class="a tx" style="left:669px;top:764px;width:200px;text-align:center;font-size:10px;line-height:12px;color:#111;letter-spacing:0.15px;font-weight:bold;">OK sheet</div>
<div class="a tx" style="left:821px;top:764px;width:200px;text-align:center;font-size:10px;line-height:12px;color:#111;letter-spacing:0.15px;font-weight:bold;">Production run</div>
<div class="a tx" style="left:620px;top:778px;width:200px;text-align:center;font-size:10px;line-height:12px;color:#111;letter-spacing:0.15px;">Tolerance</div>
<div class="a tx" style="left:620px;top:790px;width:200px;text-align:center;font-size:10px;line-height:12px;color:#111;letter-spacing:0.15px;">&Delta;E</div>
<div class="a tx" style="left:675px;top:778px;width:200px;text-align:center;font-size:10px;line-height:12px;color:#111;letter-spacing:0.15px;">Tolerance</div>
<div class="a tx" style="left:675px;top:790px;width:200px;text-align:center;font-size:10px;line-height:12px;color:#111;letter-spacing:0.15px;">Dot Gain</div>
<div class="a tx" style="left:723px;top:784px;width:200px;text-align:center;font-size:10px;line-height:12px;color:#111;letter-spacing:0.15px;">Status</div>
<div class="a tx" style="left:777px;top:778px;width:200px;text-align:center;font-size:10px;line-height:12px;color:#111;letter-spacing:0.15px;">Variance &Delta;E</div>
<div class="a tx" style="left:761px;top:791px;width:200px;text-align:center;font-size:10px;line-height:12px;color:#111;letter-spacing:0.15px;">BCM</div>
<div class="a tx" style="left:793px;top:791px;width:200px;text-align:center;font-size:10px;line-height:12px;color:#111;letter-spacing:0.15px;">Y</div>
<div class="a tx" style="left:831px;top:778px;width:200px;text-align:center;font-size:10px;line-height:12px;color:#111;letter-spacing:0.15px;">Variance</div>
<div class="a tx" style="left:831px;top:790px;width:200px;text-align:center;font-size:10px;line-height:12px;color:#111;letter-spacing:0.15px;">Dot Gain</div>
<div class="a tx" style="left:874px;top:784px;width:200px;text-align:center;font-size:10px;line-height:12px;color:#111;letter-spacing:0.15px;">Status</div>
<div class="a tx" style="left:478px;top:806px;font-size:10px;line-height:12px;color:#111">FB 001&nbsp; 4/-</div>
<div class="a" style="left:587.5px;top:804.5px;width:13px;height:13px;border-radius:50%;background:#222"></div>
<div class="a" style="left:605.5px;top:804.5px;width:13px;height:13px;border-radius:50%;background:#1a9ad8"></div>
<div class="a" style="left:623.5px;top:804.5px;width:13px;height:13px;border-radius:50%;background:#d0108a"></div>
<div class="a" style="left:642.5px;top:804.5px;width:13px;height:13px;border-radius:50%;background:#f2e000"></div>
<div class="a tx" style="left:620px;top:806px;width:200px;text-align:center;font-size:10px;line-height:12px;color:#111;letter-spacing:0.15px;">5.0</div>
<div class="a tx" style="left:675px;top:806px;width:200px;text-align:center;font-size:10px;line-height:12px;color:#111;letter-spacing:0.15px;">&plusmn;4.0</div>
<div class="a tx" style="left:761px;top:806px;width:200px;text-align:center;font-size:10px;line-height:12px;color:#111;letter-spacing:0.15px;">4.0</div>
<div class="a tx" style="left:793px;top:806px;width:200px;text-align:center;font-size:10px;line-height:12px;color:#111;letter-spacing:0.15px;">5.0</div>
<div class="a tx" style="left:831px;top:806px;width:200px;text-align:center;font-size:10px;line-height:12px;color:#111;letter-spacing:0.15px;">&plusmn;4.0</div>
<svg class="a" style="left:816px;top:804px" width="14" height="14" viewBox="0 0 14 14"><path d="M2 2.5Q7 6 12 12M11.5 2Q6 7 2.5 12.5" stroke="#e01010" stroke-width="2.6" fill="none"/></svg>
<svg class="a" style="left:966px;top:803px" width="18" height="16" viewBox="0 0 18 16"><path d="M2 9Q4 10 6 14Q10 5 16 1" stroke="#10a030" stroke-width="1.8" fill="none"/></svg>
<div class="a" style="left:418px;top:334px;width:648px;height:243px;box-shadow:0 4px 14px 4px rgba(0,0,0,0.45);border-radius:7px 7px 0 0"></div>
<div class="a" style="left:418px;top:333px;width:649px;height:244px;border-radius:7px 7px 2px 2px;border:1px solid #1c2026;background:linear-gradient(90deg,#9aa2aa 0%,#6c7884 5%,#46525e 18%,#3e4a58 45%,#3e4a58 60%,#4a5664 80%,#7c8892 92%,#9ca4ac 100%);box-shadow:inset 0 0 0 1px rgba(230,236,240,0.55)"></div>
<div class="a" style="left:419px;top:334px;width:647px;height:26px;overflow:hidden;border-radius:6px 6px 0 0"><div class="a" style="left:-10px;top:-8px;width:165px;height:42px;background:radial-gradient(closest-side,rgba(218,222,226,0.85),rgba(205,210,216,0.55) 45%,rgba(200,206,212,0) 100%)"></div></div>
<div class="a" style="left:419px;top:360px;width:5px;height:212px;background:linear-gradient(#b8a888,#e8ecef 20%,#8090a0 35%,#5a6a7a 60%,#7a8a98 80%,#4a5a6a)"></div>
<div class="a" style="left:1060px;top:360px;width:5px;height:212px;background:linear-gradient(#c0a880,#e8ecef 20%,#8090a0 35%,#5a6a7a 60%,#7a8a98 80%,#4a5a6a)"></div>
<svg class="a" style="left:425px;top:338px" width="17" height="18" viewBox="0 0 17 18"><path d="M9 1V14M2.5 7.5H15.5M4.2 2.7 13.8 12.3M13.8 2.7 4.2 12.3" stroke="#2a50a0" stroke-width="1.2"/><circle cx="9" cy="7.5" r="3.2" fill="#c0e4ff" stroke="#3a70c0" stroke-width="1"/><path d="M0.5 12.5H5L6 11H9L10 12.5H14L16 14.5 14 16.5H0.5Z" fill="#f4d020"/><path d="M2 14.5H5M7 14.5H10" stroke="#a08010" stroke-width="0.8"/></svg>
<div class="a tx" style="left:447px;top:340px;color:#0c0c10">Presettings</div>
<div class="a" style="left:1013px;top:333px;width:47px;height:19px;border-radius:0 0 4px 4px;border:1px solid #6a2418;background:linear-gradient(#e8a090,#d07060 35%,#b83a22 50%,#c44a30 80%,#d88070);box-shadow:0 0 0 1px rgba(255,255,255,0.5)"></div>
<svg class="a" style="left:1031px;top:336px" width="13" height="12" viewBox="0 0 13 12"><path d="M2.5 2.5 10.5 9.5M10.5 2.5 2.5 9.5" stroke="#2a3040" stroke-width="4.4" stroke-linecap="round"/><path d="M2.5 2.5 10.5 9.5M10.5 2.5 2.5 9.5" stroke="#fff" stroke-width="2.6"/></svg>
<div class="a" style="left:424px;top:360px;width:636px;height:212px;background:#5f5f68;border:1px solid #d8dade"></div>
<div class="a" style="left:425px;top:532px;width:634px;height:1px;background:#b8b8bc"></div>
<div class="a" style="left:425px;top:533px;width:634px;height:38px;background:#48474f"></div>
<div class="a" style="left:436px;top:395px;width:606px;height:119px;background:#48474f;box-shadow:3px 4px 5px rgba(0,0,0,0.35)"></div>
<div class="a" style="left:436px;top:395px;width:172px;height:1px;background:#9a9aa0"></div>
<div class="a" style="left:678px;top:395px;width:364px;height:1px;background:#9a9aa0"></div>
<div class="a tab" style="left:436px;top:375px;width:78px;height:20px">General</div>
<div class="a tab" style="left:513px;top:375px;width:95px;height:20px">Time sheet</div>
<div class="a tab" style="left:607px;top:375px;width:71px;height:21px;background:#48474f;color:#f59a1e">Quality</div>
<div class="a tx" style="left:445px;top:405px">Print standard</div>
<div class="a tx" style="left:445px;top:434px">Reference Value in the "Progress" Report</div>
<div class="a inp" style="left:678px;top:401px;width:359px;height:21px"></div>
<div class="a tx" style="left:685px;top:405px">ISO 12647-2 HDM_Default</div>
<div class="a btn" style="left:1022px;top:402px;width:14px;height:19px"></div>
<svg class="a" style="left:1023px;top:408px" width="12" height="8" viewBox="0 0 12 8"><path d="M1 1H11L6 7Z" fill="#fff"/></svg>
<div class="a" style="left:448px;top:467px;width:13px;height:13px;border:1px solid #b0b0b6"></div>
<svg class="a" style="left:449px;top:468px" width="11" height="11" viewBox="0 0 11 11"><path d="M2 5.5 4.5 8 9 2.5" stroke="#b8b8bc" stroke-width="1.6" fill="none"/></svg>
<div class="a tx" style="left:469px;top:467px;width:208px;overflow:hidden">Show measurements for waste sheets</div>
<div class="a" style="left:448px;top:496px;width:13px;height:13px;border:1px solid #b0b0b6"></div>
<svg class="a" style="left:449px;top:497px" width="11" height="11" viewBox="0 0 11 11"><path d="M2 5.5 4.5 8 9 2.5" stroke="#b8b8bc" stroke-width="1.6" fill="none"/></svg>
<div class="a tx" style="left:469px;top:496px;width:208px;overflow:hidden">Show single values of measurements</div>
<div class="a" style="left:676px;top:428px;width:363px;height:25px;border:1px dotted #e8e8e8"></div>
<div class="a" style="left:678px;top:429px;width:359px;height:22px;background:#55555d"></div>
<div class="a tx" style="left:685px;top:434px">Impressions</div>
<div class="a btn" style="left:1022px;top:430px;width:14px;height:21px"></div>
<svg class="a" style="left:1023px;top:437px" width="12" height="8" viewBox="0 0 12 8"><path d="M1 1H11L6 7Z" fill="#fff"/></svg>
<div class="a" style="left:1022px;top:452px;width:19px;height:64px;background:#3a3a40;opacity:0.6"></div>
<div class="a" style="left:678px;top:451px;width:344px;height:66px;background:#7b7c84;border-top:1px solid #9c9ca2"></div>
<div class="a" style="left:678px;top:473px;width:344px;height:1px;background:#9c9ca2"></div>
<div class="a" style="left:678px;top:495px;width:344px;height:21px;background:#ff8c00"></div>
<div class="a" style="left:678px;top:516px;width:344px;height:1px;background:#26262a"></div>
<div class="a" style="left:1021px;top:451px;width:1px;height:66px;background:#111"></div>
<div class="a tx" style="left:686px;top:456px">Measurement</div>
<div class="a tx" style="left:686px;top:478px">Time</div>
<div class="a tx" style="left:686px;top:500px;color:#111">Impressions</div>
<div class="a" style="left:677px;top:429px;width:355px;height:88px;border:2px solid #ff0000;border-radius:6px"></div>
<div class="a" style="left:980px;top:434px;width:29px;height:29px;border-radius:50%;background:#fe0000;color:#fff;font-size:16px;line-height:27px;text-align:center">2</div>
<div class="a btn" style="left:923px;top:541px;width:49px;height:19px;font-weight:bold;text-align:center;line-height:19px;color:#fff">OK</div>
<div class="a btn" style="left:979px;top:540px;width:73px;height:21px;font-weight:bold;text-align:center;line-height:19px;color:#fff;border:1px solid #dcdce0">Cancel</div>
<div class="a" style="left:413px;top:331px;width:659px;height:244px;border:2.5px solid #ff0000;border-radius:8px"></div>
<svg class="a" style="left:1060px;top:530px" width="320" height="330" viewBox="1060 530 320 330"><path d="M1077.7 543.1 1104.3 554.4 1098 559.5 1355.3 847.2 1352.8 849.6 1090.5 566 1086.4 570.7Z" fill="#ff0000"/></svg>
<div class="a" style="left:1354px;top:855px;width:39px;height:31px;border:2.6px solid #ff0000;border-radius:6px"></div>
<div class="a" style="left:1385px;top:821px;width:29px;height:29px;border-radius:50%;background:#fe0000"></div>
<svg class="a" style="left:1390px;top:826px" width="20" height="20" viewBox="1390 826 20 20"><path d="M1397.5 839.8V831.6L1395.3 832.8V830.6L1398.2 829H1401V839.8Z" fill="#fff"/></svg>
</body></html>
